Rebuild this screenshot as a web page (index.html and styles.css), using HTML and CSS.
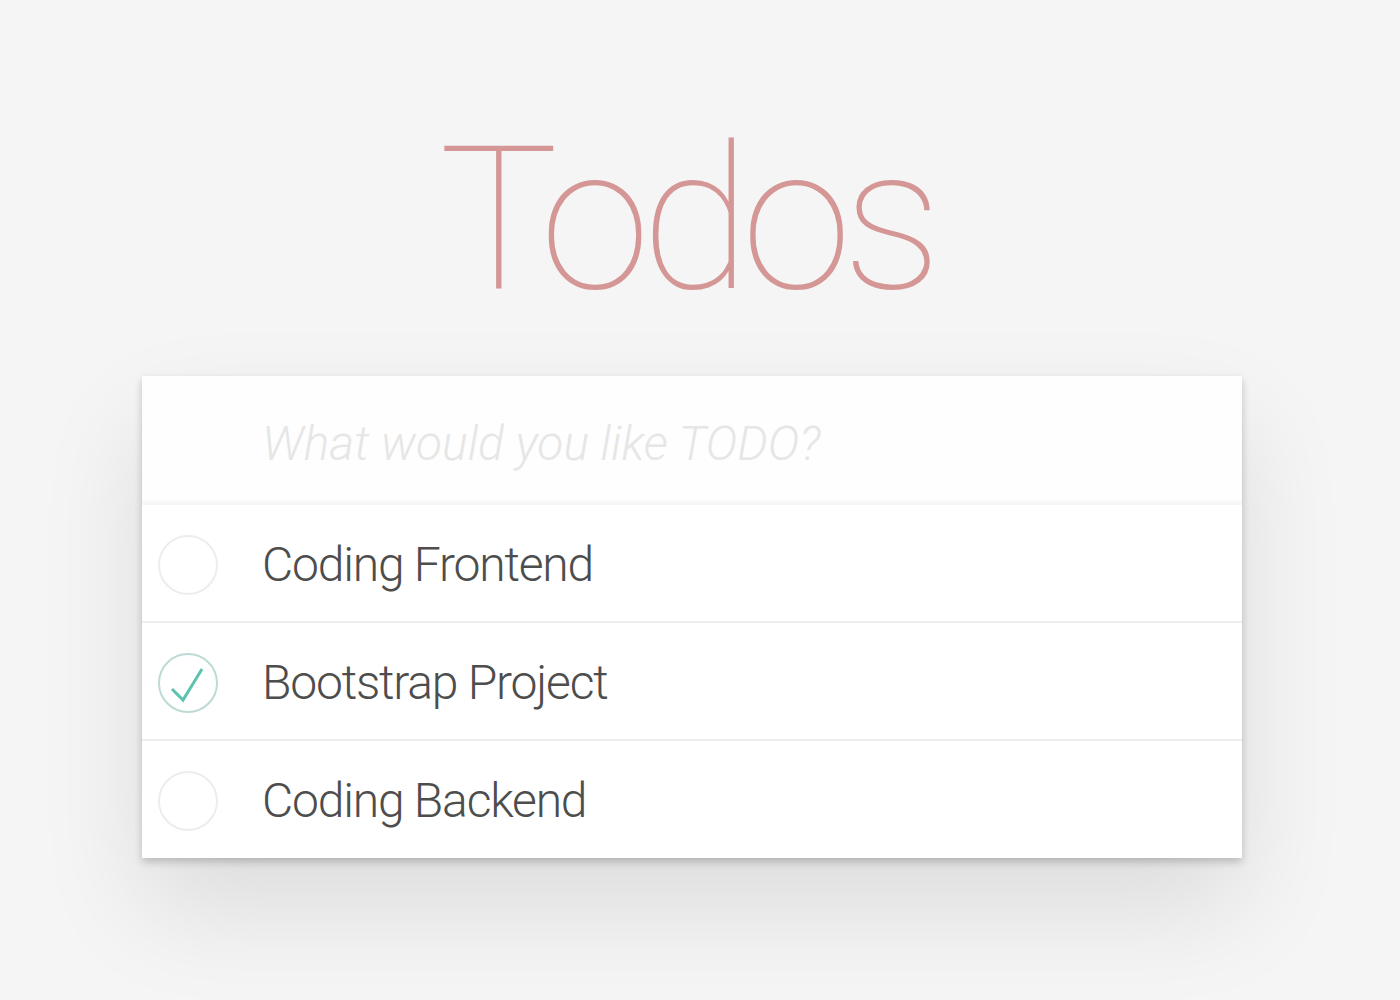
FILE: index.html
```html
<!DOCTYPE html>
<html lang="en">
<head>
<meta charset="utf-8">
<title>Todos</title>
<link rel="stylesheet" href="styles.css">
</head>
<body>
<section class="app">
  <h1 class="title">Todos</h1>
  <div class="card">
    <div class="new-todo">What would you like TODO?</div>
    <ul class="list">
      <li class="item">
        <span class="toggle"><svg width="60" height="60" viewBox="0 0 60 60"><circle cx="30" cy="30" r="29" fill="none" stroke="#ededed" stroke-width="2"/></svg></span>
        <span class="label">Coding Frontend</span>
      </li>
      <li class="item">
        <span class="toggle"><svg width="60" height="60" viewBox="0 0 60 60"><circle cx="30" cy="30" r="29" fill="none" stroke="#bddad5" stroke-width="2"/><path d="M14 36 L25 47 L44 16" fill="none" stroke="#5dc2af" stroke-width="3"/></svg></span>
        <span class="label">Bootstrap Project</span>
      </li>
      <li class="item">
        <span class="toggle"><svg width="60" height="60" viewBox="0 0 60 60"><circle cx="30" cy="30" r="29" fill="none" stroke="#ededed" stroke-width="2"/></svg></span>
        <span class="label">Coding Backend</span>
      </li>
    </ul>
  </div>
</section>
</body>
</html>
```
FILE: styles.css
```css
html, body {
  margin: 0;
  padding: 0;
}
body {
  background: #f5f5f5;
  font-family: "Helvetica Neue", Roboto, "Liberation Sans", sans-serif;
  font-weight: 300;
  color: #4d4d4d;
  width: 1400px;
  height: 1000px;
  overflow: hidden;
}
.app {
  width: 1100px;
  margin: 0 0 0 142px;
  padding-top: 110px;
}
.title {
  margin: 0;
  height: 266px;
  font-size: 200px;
  line-height: 220px;
  font-weight: 100;
  text-align: center;
  color: #d59696;
  letter-spacing: -9px;
  text-indent: -12px;
}
.card {
  background: #fff;
  box-shadow: 0 4px 8px 0 rgba(0,0,0,0.2), 0 50px 100px 0 rgba(0,0,0,0.1);
}
.new-todo {
  height: 129px;
  box-sizing: border-box;
  padding: 40px 32px 0 120px;
  font-size: 48px;
  line-height: 56px;
  font-style: italic;
  font-weight: 300;
  color: #e6e6e6;
  background: rgba(0,0,0,0.003);
  box-shadow: inset 0 -4px 2px rgba(0,0,0,0.03);
}
.list {
  list-style: none;
  margin: 0;
  padding: 0;
}
.item {
  display: flex;
  align-items: center;
  height: 118px;
  padding-top: 3px;
  box-sizing: border-box;
  border-bottom: 2px solid #ededed;
}
.item:last-child {
  border-bottom: none;
  height: 117px;
}
.toggle {
  width: 60px;
  height: 60px;
  margin-left: 16px;
  margin-right: 44px;
  display: flex;
}
.label {
  font-size: 48px;
  line-height: 58px;
  color: #4d4d4d;
  letter-spacing: -1.2px;
}
```
